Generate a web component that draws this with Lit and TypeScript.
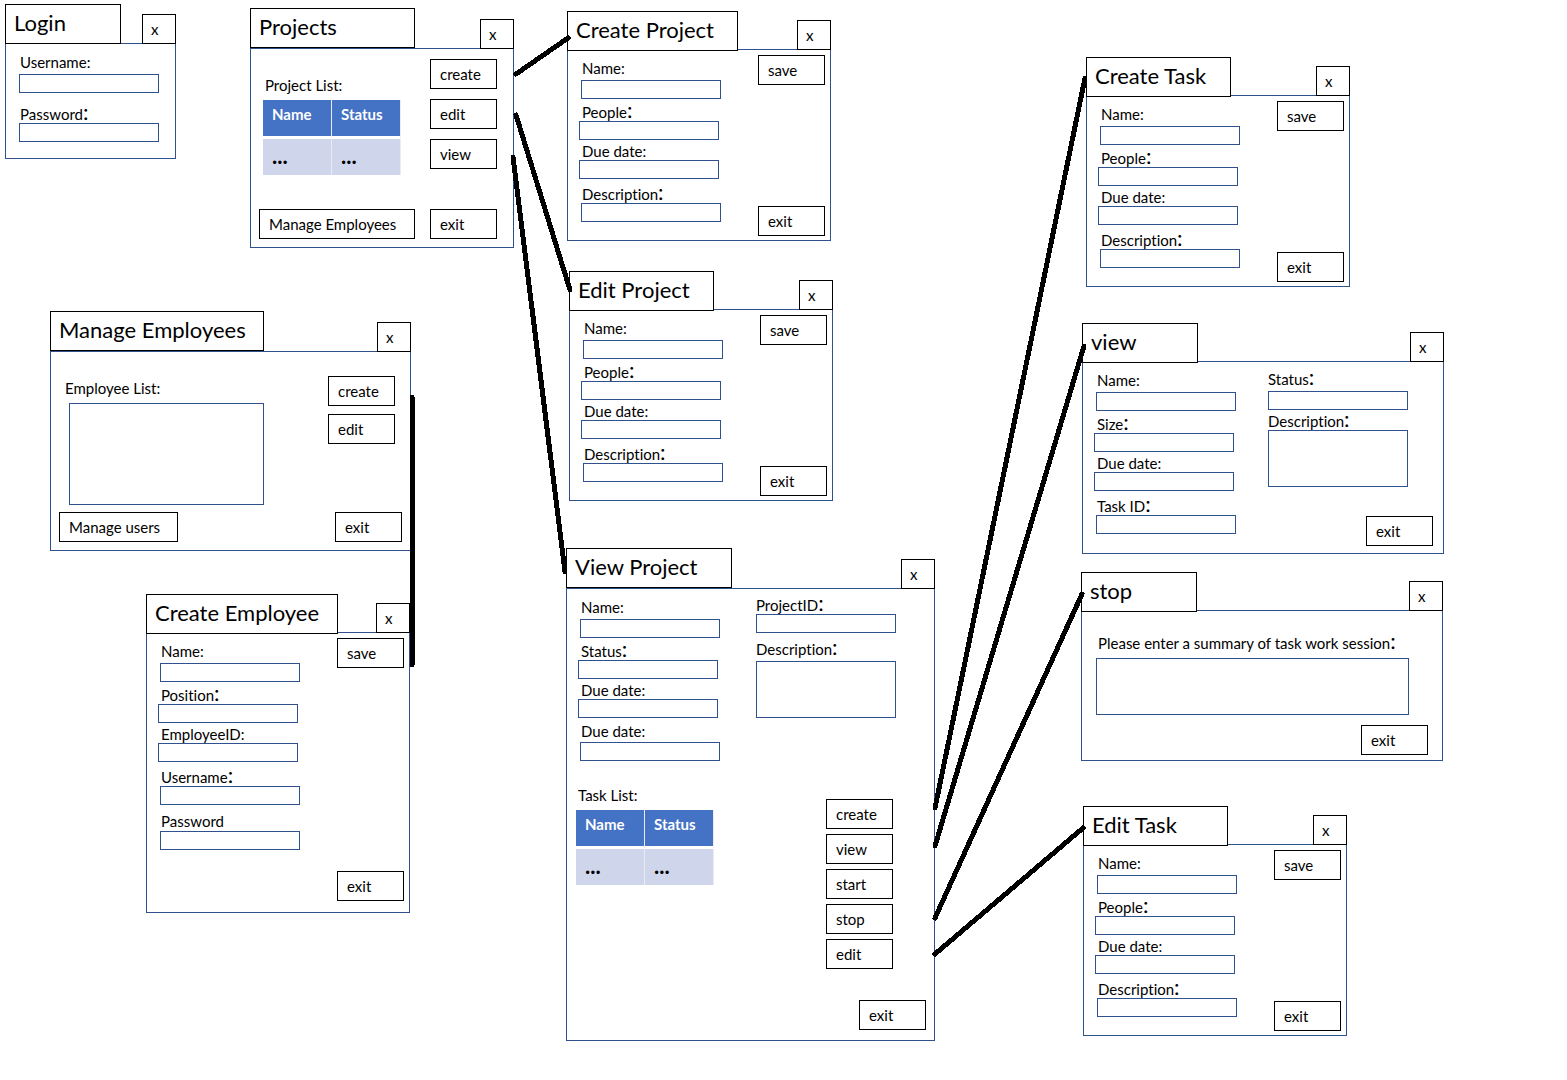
import { LitElement, html, svg, css, nothing } from "lit";
import type { TemplateResult } from "lit";
import { customElement, property } from "lit/decorators.js";
import { classMap } from "lit/directives/class-map.js";
import { styleMap } from "lit/directives/style-map.js";

/** A window on the canvas: title tab, close button and a framed body. */
@customElement("wire-window")
class WireWindow extends LitElement {
  @property() heading = "";
  @property({ type: Number }) tab = 144;
  @property({ type: Number }) head = 38;
  @property({ type: Number }) body = 192;

  static styles = css`
    :host {
      display: block;
      position: absolute;
    }
    .head {
      display: flex;
      justify-content: space-between;
      align-items: flex-end;
      position: relative;
    }
    .title {
      box-sizing: border-box;
      height: 40px;
      margin: 0;
      padding: 0 8px;
      align-self: flex-start;
      border: 1px solid #000;
      background: #fff;
      font-size: 22px;
      font-weight: 400;
      line-height: 36px;
      white-space: nowrap;
    }
    .close {
      box-sizing: border-box;
      width: 34px;
      height: 30px;
      margin: 0 0 -1px;
      padding: 0 8px;
      border: 1px solid #000;
      background: #fff;
      color: #000;
      font: inherit;
      text-align: left;
    }
    .body {
      box-sizing: border-box;
      display: grid;
      border: 1px solid #2f528f;
    }
  `;

  render() {
    return html`
      <header class="head" style=${styleMap({ height: `${this.head}px` })}>
        <h2 class="title" style=${styleMap({ width: `${this.tab}px` })}>${this.heading}</h2>
        <button class="close" type="button">x</button>
      </header>
      <div class="body" style=${styleMap({ minHeight: `${this.body}px` })}><slot></slot></div>
    `;
  }
}

interface FieldOptions {
  big?: boolean;
  raised?: boolean;
  inset?: boolean;
  spaced?: boolean;
  compact?: boolean;
  loose?: boolean;
  area?: boolean;
  password?: boolean;
}

interface WindowSpec {
  x: number;
  y: number;
  w: number;
  heading: string;
  tab: number;
  head: number;
  body: number;
  content: TemplateResult;
}

const connectors: [number, number, number, number][] = [
  [516, 74, 568, 38],
  [516, 115, 570, 290],
  [513, 157, 565, 572],
  [412, 397, 412, 665],
  [935, 808, 1085, 78],
  [935, 846, 1084, 346],
  [935, 918, 1082, 594],
  [935, 954, 1083, 828],
];

@customElement("app-root")
export class AppRoot extends LitElement {
  static styles = css`
    :host {
      display: block;
      font-family: Lato, Carlito, sans-serif;
      font-size: 15px;
      line-height: 18px;
      font-variant-ligatures: none;
      color: #000;
      background: #fff;
    }
    .canvas {
      position: relative;
      min-height: 100vh;
      overflow: hidden;
    }
    .links {
      position: absolute;
      inset: 0;
      width: 100%;
      height: 100%;
      pointer-events: none;
      stroke: #000;
      stroke-width: 5px;
      stroke-linecap: round;
      shape-rendering: crispEdges;
    }
    .btn {
      box-sizing: border-box;
      min-width: 67px;
      height: 30px;
      padding: 0 9px;
      border: 1px solid #000;
      background: #fff;
      color: #000;
      font: inherit;
      text-align: left;
      white-space: nowrap;
    }
    .wide {
      min-width: 156px;
    }
    .medium {
      min-width: 119px;
    }
    .field {
      display: flex;
      flex-direction: column;
      align-items: flex-start;
    }
    .label {
      box-sizing: border-box;
      height: 22px;
      padding: 4px 0 0 3px;
      white-space: nowrap;
    }
    .loose .label {
      height: 24px;
      padding-top: 6px;
    }
    .compact .label {
      height: 20px;
      padding-top: 2px;
    }
    .raised .label {
      padding-top: 1px;
    }
    .loose.raised .label {
      padding-top: 4px;
    }
    .spaced {
      margin-top: 6px;
    }
    .colon {
      font-size: 22px;
      line-height: 0;
    }
    .box {
      box-sizing: border-box;
      display: block;
      width: 140px;
      height: 19px;
      margin: 0;
      padding: 0 4px;
      border: 1px solid #2f528f;
      border-radius: 0;
      background: #fff;
      color: #000;
      font: inherit;
      resize: none;
      outline: 0;
    }
    .inset .box {
      margin-left: 2px;
    }
    .area .box {
      height: 57px;
    }
    .form {
      display: flex;
      justify-content: space-between;
    }
    .fields {
      padding: 8px 0 0 11px;
    }
    .actions {
      display: flex;
      flex-direction: column;
      justify-content: space-between;
      padding: 5px 5px 4px;
    }
    .actions.tall {
      padding-bottom: 11px;
    }
    .stack {
      display: flex;
      flex-direction: column;
      justify-content: space-between;
    }
    .row {
      display: flex;
      justify-content: space-between;
      align-items: flex-start;
    }
    .column {
      display: flex;
      flex-direction: column;
      gap: 10px;
    }
    .split {
      display: grid;
      grid-template-columns: 189px 1fr;
    }
    .split.narrow {
      grid-template-columns: 185px 1fr;
    }
    .side {
      display: flex;
      flex-direction: column;
      padding: 3px 10px 7px 0;
    }
    .narrow .side {
      padding-top: 7px;
    }
    .side .label {
      padding-left: 0;
    }
    .side .btn {
      margin-top: auto;
      align-self: flex-end;
    }
    .projects {
      padding: 10px 16px 8px 8px;
    }
    .projects .list {
      padding: 13px 0 0 4px;
    }
    .employees {
      padding: 23px 8px 8px 8px;
    }
    .employees .list {
      padding-left: 4px;
    }
    .employees .column {
      gap: 8px;
      padding: 1px 7px 0 0;
    }
    .list .label {
      height: 28px;
      padding-left: 2px;
    }
    .listbox {
      width: 195px;
      height: 102px;
      margin-left: 6px;
    }
    .tasks {
      padding: 0 41px 0 9px;
      margin-top: 21px;
    }
    .tasks .column {
      gap: 5px;
      padding-top: 17px;
    }
    .details {
      display: flex;
      flex-direction: column;
    }
    .details > .btn {
      margin: auto 8px 10px auto;
    }
    .summary {
      display: flex;
      flex-direction: column;
      padding: 19px 14px 5px;
    }
    .summary .label {
      height: 28px;
      padding-left: 2px;
    }
    .summary .box {
      width: 313px;
    }
    .summary .btn {
      margin-top: auto;
      align-self: flex-end;
    }
    .grid {
      border-collapse: separate;
      border-spacing: 0;
      table-layout: fixed;
      width: 138px;
    }
    .grid th,
    .grid td {
      box-sizing: border-box;
      height: 36px;
      padding: 0 9px;
      text-align: left;
      border-right: 1px solid #e9ebf5;
      font-weight: 700;
    }
    .grid th {
      height: 39px;
      padding-bottom: 8px;
      background: #4472c4;
      color: #fff;
      border-bottom: 3px solid #fff;
    }
    .grid td {
      padding-bottom: 2px;
      background: #cfd5ea;
      font-size: 22px;
    }
  `;

  private field(id: string, text: string, o: FieldOptions = {}) {
    const classes = {
      field: true,
      raised: !!o.raised,
      inset: !!o.inset,
      spaced: !!o.spaced,
      compact: !!o.compact,
      loose: !!o.loose,
      area: !!o.area,
    };
    return html`
      <div class=${classMap(classes)}>
        <label class="label" for=${id}>${text}${o.big ? html`<span class="colon">:</span>` : nothing}</label>
        ${o.area
          ? html`<textarea class="box" id=${id}></textarea>`
          : html`<input class="box" id=${id} type=${o.password ? "password" : "text"} />`}
      </div>
    `;
  }

  private button(text: string, extra = "") {
    return html`<button class="btn ${extra}" type="button">${text}</button>`;
  }

  private editForm(id: string) {
    return html`
      <form class="form">
        <div class="fields">
          ${this.field(`${id}-name`, "Name:", { raised: true, inset: true })}
          ${this.field(`${id}-people`, "People", { big: true })}
          ${this.field(`${id}-due`, "Due date:", { compact: true })}
          ${this.field(`${id}-description`, "Description", { big: true, inset: true, loose: true })}
        </div>
        <div class="actions">${this.button("save")}${this.button("exit")}</div>
      </form>
    `;
  }

  private list(id: string, caption: string) {
    return html`
      <div class="list">
        <div class="label" id=${id}>${caption}</div>
        <table class="grid" aria-labelledby=${id}>
          <thead>
            <tr><th scope="col">Name</th><th scope="col">Status</th></tr>
          </thead>
          <tbody>
            <tr><td>...</td><td>...</td></tr>
          </tbody>
        </table>
      </div>
    `;
  }

  private windows(): WindowSpec[] {
    return [
      {
        x: 5, y: 4, w: 171, heading: "Login", tab: 116, head: 39, body: 116,
        content: html`
          <form class="fields">
            ${this.field("login-user", "Username:", { raised: true, inset: true })}
            ${this.field("login-password", "Password", { big: true, inset: true, loose: true, spaced: true, password: true })}
          </form>
        `,
      },
      {
        x: 250, y: 8, w: 264, heading: "Projects", tab: 165, head: 40, body: 200,
        content: html`
          <div class="stack projects">
            <div class="row">
              ${this.list("project-list", "Project List:")}
              <div class="column">${["create", "edit", "view"].map((t) => this.button(t))}</div>
            </div>
            <div class="row">${this.button("Manage Employees", "wide")}${this.button("exit")}</div>
          </div>
        `,
      },
      {
        x: 567, y: 11, w: 264, heading: "Create Project", tab: 171, head: 38, body: 192,
        content: this.editForm("create-project"),
      },
      {
        x: 569, y: 271, w: 264, heading: "Edit Project", tab: 145, head: 38, body: 192,
        content: this.editForm("edit-project"),
      },
      {
        x: 50, y: 311, w: 361, heading: "Manage Employees", tab: 214, head: 40, body: 200,
        content: html`
          <div class="stack employees">
            <div class="row">
              <div class="list">
                <label class="label field" for="employee-list">Employee List:</label>
                <textarea class="box listbox" id="employee-list"></textarea>
              </div>
              <div class="column">${["create", "edit"].map((t) => this.button(t))}</div>
            </div>
            <div class="row">${this.button("Manage users", "medium")}${this.button("exit")}</div>
          </div>
        `,
      },
      {
        x: 146, y: 594, w: 264, heading: "Create Employee", tab: 192, head: 38, body: 281,
        content: html`
          <form class="form">
            <div class="fields">
              ${this.field("employee-name", "Name:", { raised: true, inset: true })}
              ${this.field("employee-position", "Position", { big: true })}
              ${this.field("employee-id", "EmployeeID:", { compact: true })}
              ${this.field("employee-user", "Username", { big: true, inset: true, loose: true })}
              ${this.field("employee-password", "Password", { raised: true, compact: true, inset: true, spaced: true, password: true })}
            </div>
            <div class="actions tall">${this.button("save")}${this.button("exit")}</div>
          </form>
        `,
      },
      {
        x: 566, y: 548, w: 369, heading: "View Project", tab: 166, head: 40, body: 453,
        content: html`
          <div class="details">
            <div class="split">
              <div class="fields">
                ${this.field("project-name", "Name:", { raised: true, inset: true })}
                ${this.field("project-status", "Status", { big: true })}
                ${this.field("project-due", "Due date:", { compact: true })}
                ${this.field("project-due-2", "Due date:", { raised: true, inset: true, loose: true })}
              </div>
              <div class="side">
                ${this.field("project-id", "ProjectID", { big: true })}
                ${this.field("project-description", "Description", { big: true, raised: true, spaced: true, area: true })}
              </div>
            </div>
            <div class="row tasks">
              ${this.list("task-list", "Task List:")}
              <div class="column">
                ${["create", "view", "start", "stop", "edit"].map((t) => this.button(t))}
              </div>
            </div>
            ${this.button("exit")}
          </div>
        `,
      },
      {
        x: 1086, y: 57, w: 264, heading: "Create Task", tab: 145, head: 38, body: 192,
        content: this.editForm("create-task"),
      },
      {
        x: 1082, y: 323, w: 362, heading: "view", tab: 116, head: 38, body: 193,
        content: html`
          <form class="split narrow">
            <div class="fields">
              ${this.field("task-name", "Name:", { raised: true, inset: true })}
              ${this.field("task-size", "Size", { big: true })}
              ${this.field("task-due", "Due date:", { compact: true })}
              ${this.field("task-id", "Task ID", { big: true, inset: true, loose: true })}
            </div>
            <div class="side">
              ${this.field("task-status", "Status", { big: true, raised: true })}
              ${this.field("task-description", "Description", { big: true, compact: true, area: true })}
              ${this.button("exit")}
            </div>
          </form>
        `,
      },
      {
        x: 1081, y: 572, w: 362, heading: "stop", tab: 116, head: 38, body: 151,
        content: html`
          <form class="summary">
            ${this.field("session-summary", "Please enter a summary of task work session", { big: true, area: true })}
            ${this.button("exit")}
          </form>
        `,
      },
      {
        x: 1083, y: 806, w: 264, heading: "Edit Task", tab: 145, head: 38, body: 192,
        content: this.editForm("edit-task"),
      },
    ];
  }

  render() {
    return html`
      <main class="canvas">
        ${this.windows().map(
          (w) => html`
            <wire-window
              .heading=${w.heading}
              .tab=${w.tab}
              .head=${w.head}
              .body=${w.body}
              style=${styleMap({ left: `${w.x}px`, top: `${w.y}px`, width: `${w.w}px` })}
              >${w.content}</wire-window
            >
          `
        )}
        <svg class="links" aria-hidden="true">
          ${connectors.map(([x1, y1, x2, y2]) => svg`<line x1=${x1} y1=${y1} x2=${x2} y2=${y2} />`)}
        </svg>
      </main>
    `;
  }
}
